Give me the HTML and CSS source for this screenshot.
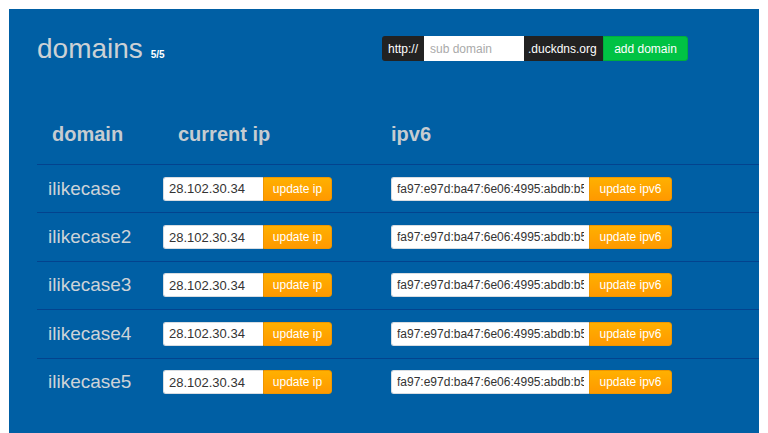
FILE: index.html
```html
<!DOCTYPE html>
<html lang="en">
<head>
  <meta charset="UTF-8">
  <meta name="viewport" content="width=device-width, initial-scale=1.0">
  <title>domains</title>
  <link rel="stylesheet" href="styles.css">
</head>
<body>
  <div class="panel">
    <div class="panel-hd">
      <h1 class="title">domains <small class="count">5/5</small></h1>
      <form class="add-form">
        <span class="add-pre">http://</span>
        <input type="text" class="add-input" placeholder="sub domain">
        <span class="add-post">.duckdns.org</span>
        <button type="button" class="add-btn">add domain</button>
      </form>
    </div>

    <div class="domains">
      <div class="domains-hd">
        <div class="col-domain">domain</div>
        <div class="col-ip">current ip</div>
        <div class="col-ipv6">ipv6</div>
      </div>

      <div class="domain-row">
        <div class="domain-name">ilikecase</div>
        <div class="ip-group">
          <input type="text" class="ip-input" value="28.102.30.34">
          <button type="button" class="ip-btn">update ip</button>
        </div>
        <div class="ip-group">
          <input type="text" class="ipv6-input" value="fa97:e97d:ba47:6e06:4995:abdb:b52a:1f3c">
          <button type="button" class="ipv6-btn">update ipv6</button>
        </div>
      </div>

      <div class="domain-row">
        <div class="domain-name">ilikecase2</div>
        <div class="ip-group">
          <input type="text" class="ip-input" value="28.102.30.34">
          <button type="button" class="ip-btn">update ip</button>
        </div>
        <div class="ip-group">
          <input type="text" class="ipv6-input" value="fa97:e97d:ba47:6e06:4995:abdb:b52a:1f3c">
          <button type="button" class="ipv6-btn">update ipv6</button>
        </div>
      </div>

      <div class="domain-row">
        <div class="domain-name">ilikecase3</div>
        <div class="ip-group">
          <input type="text" class="ip-input" value="28.102.30.34">
          <button type="button" class="ip-btn">update ip</button>
        </div>
        <div class="ip-group">
          <input type="text" class="ipv6-input" value="fa97:e97d:ba47:6e06:4995:abdb:b52a:1f3c">
          <button type="button" class="ipv6-btn">update ipv6</button>
        </div>
      </div>

      <div class="domain-row">
        <div class="domain-name">ilikecase4</div>
        <div class="ip-group">
          <input type="text" class="ip-input" value="28.102.30.34">
          <button type="button" class="ip-btn">update ip</button>
        </div>
        <div class="ip-group">
          <input type="text" class="ipv6-input" value="fa97:e97d:ba47:6e06:4995:abdb:b52a:1f3c">
          <button type="button" class="ipv6-btn">update ipv6</button>
        </div>
      </div>

      <div class="domain-row">
        <div class="domain-name">ilikecase5</div>
        <div class="ip-group">
          <input type="text" class="ip-input" value="28.102.30.34">
          <button type="button" class="ip-btn">update ip</button>
        </div>
        <div class="ip-group">
          <input type="text" class="ipv6-input" value="fa97:e97d:ba47:6e06:4995:abdb:b52a:1f3c">
          <button type="button" class="ipv6-btn">update ipv6</button>
        </div>
      </div>
    </div>
  </div>
</body>
</html>
```

FILE: styles.css
```css
*{
  margin: 0;
  padding: 0;
  box-sizing: border-box;
  font-family: "Liberation Sans", Arial, sans-serif;
}

body{
  background: #fff;
  padding: 9px 9px 0 9px;
  overflow: hidden;
}

.panel{
  background: #005fa4;
  height: calc(100vh - 9px);
  padding: 27px 0 0 28px;
}

.panel-hd{
  display: flex;
  align-items: flex-start;
}

.title{
  width: 345px;
  margin-top: -3px;
  font-size: 28px;
  line-height: 32px;
  font-weight: normal;
  color: #ccd1d5;
}

.count{
  font-size: 10px;
  font-weight: bold;
  color: #fff;
}

.add-form{
  display: flex;
  height: 25px;
}

.add-pre,
.add-post{
  display: flex;
  align-items: center;
  background: #222;
  color: #fff;
  font-size: 12px;
}

.add-pre{
  width: 42px;
  padding-left: 6px;
  border-radius: 3px 0 0 3px;
}

.add-post{
  width: 79px;
  padding-left: 4px;
}

.add-input{
  width: 100px;
  height: 25px;
  border: none;
  padding: 0 6px;
  font-size: 12px;
  color: #333;
  outline: none;
}

.add-input::placeholder{
  color: #aaa;
}

.add-btn{
  width: 85px;
  height: 25px;
  background: #00c244;
  border: 1px solid #00ae3c;
  border-radius: 0 3px 3px 0;
  color: #fff;
  font-size: 12px;
  cursor: pointer;
}

.domains{
  margin-top: 51px;
}

.domains-hd,
.domain-row{
  display: grid;
  grid-template-columns: 126px 228px 1fr;
  align-items: center;
}

.domains-hd{
  padding-bottom: 18px;
  font-size: 20px;
  line-height: 24px;
  font-weight: bold;
  color: #c6ccd1;
}

.col-domain,
.col-ip{
  padding-left: 15px;
}

.domain-row{
  height: 48.4px;
  border-top: 1px solid #03438e;
}

.domain-name{
  padding-left: 11px;
  font-size: 19px;
  line-height: 22px;
  color: #cdd3d8;
}

.ip-group{
  display: flex;
  height: 24px;
}

.ip-input,
.ipv6-input{
  height: 24px;
  border: 1px solid #d8dde2;
  border-right: none;
  border-radius: 3px 0 0 3px;
  background: #fff;
  padding: 0 5px;
  color: #333;
  outline: none;
}

.ip-input{
  width: 100px;
  font-size: 13px;
}

.ipv6-input{
  width: 198px;
  font-size: 12px;
}

.ip-btn,
.ipv6-btn{
  height: 24px;
  background: linear-gradient(#ffb000, #ff9900);
  border: 1px solid #ee9600;
  border-radius: 0 3px 3px 0;
  color: #fff;
  font-size: 12px;
  cursor: pointer;
}

.ip-btn{
  width: 69px;
}

.ipv6-btn{
  width: 83px;
}
```
